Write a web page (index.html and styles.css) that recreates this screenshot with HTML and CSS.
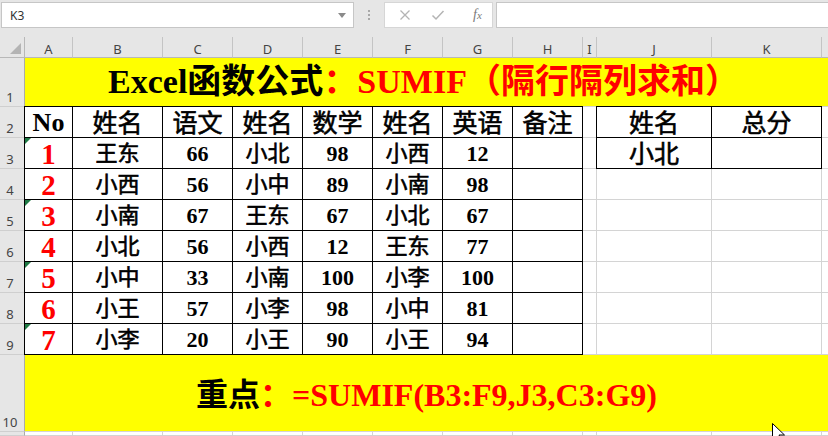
FILE: index.html
```html
<!DOCTYPE html>
<html lang="zh-CN">
<head>
<meta charset="utf-8">
<title>SUMIF 隔行隔列求和</title>
<link rel="stylesheet" href="styles.css">
</head>
<body>
<div class="app">
  <div class="fbar">
    <div class="namebox">
      <span class="ref">K3</span>
      <svg class="dd" width="8" height="5" viewBox="0 0 8 5"><path d="M0 0 L8 0 L4 5 Z" fill="#8a8a8a"/></svg>
    </div>
    <div class="dots"><i></i><i></i><i></i></div>
    <div class="iconbox">
      <svg class="ic" width="12" height="12" viewBox="0 0 12 12"><path d="M1.5 1.5 L10.5 10.5 M10.5 1.5 L1.5 10.5" stroke="#b4b4b4" stroke-width="1.3" fill="none"/></svg>
      <svg class="ic" width="14" height="12" viewBox="0 0 14 12"><path d="M1.5 6.5 L5 10 L12.5 2" stroke="#b4b4b4" stroke-width="1.5" fill="none"/></svg>
      <span class="fx"><i>f</i><i class="x">x</i></span>
    </div>
    <div class="finput"></div>
  </div>

  <div class="sheet">
    <!-- column headers -->
    <div class="corner"><span class="ctri"></span></div>
    <div class="ch">A</div><div class="ch">B</div><div class="ch">C</div><div class="ch">D</div>
    <div class="ch">E</div><div class="ch">F</div><div class="ch">G</div><div class="ch">H</div>
    <div class="ch">I</div><div class="ch">J</div><div class="ch">K</div><div class="ch last"></div>

    <!-- row 1 -->
    <div class="rh">1</div>
    <div class="title">Excel函数公式<span class="red">：SUMIF（隔行隔列求和）</span></div>

    <!-- row 2 -->
    <div class="rh">2</div>
    <div class="c t tl lat">No</div>
    <div class="c t top hd">姓名</div>
    <div class="c t top hd">语文</div>
    <div class="c t top hd">姓名</div>
    <div class="c t top hd">数学</div>
    <div class="c t top hd">姓名</div>
    <div class="c t top hd">英语</div>
    <div class="c t top hd">备注</div>
    <div class="c"></div>
    <div class="c t tl hd">姓名</div>
    <div class="c t top hd">总分</div>
    <div class="c last"></div>

    <!-- row 3 -->
    <div class="rh">3</div>
    <div class="c t lft num">1<span class="mark"></span></div>
    <div class="c t nm">王东</div><div class="c t sc">66</div>
    <div class="c t nm">小北</div><div class="c t sc">98</div>
    <div class="c t nm">小西</div><div class="c t sc">12</div>
    <div class="c t"></div><div class="c"></div>
    <div class="c t lft hd">小北</div><div class="c t"></div><div class="c last"></div>

    <!-- row 4 -->
    <div class="rh">4</div>
    <div class="c t lft num">2</div>
    <div class="c t nm">小西</div><div class="c t sc">56</div>
    <div class="c t nm">小中</div><div class="c t sc">89</div>
    <div class="c t nm">小南</div><div class="c t sc">98</div>
    <div class="c t"></div><div class="c"></div>
    <div class="c"></div><div class="c"></div><div class="c last"></div>

    <!-- row 5 -->
    <div class="rh">5</div>
    <div class="c t lft num">3<span class="mark"></span></div>
    <div class="c t nm">小南</div><div class="c t sc">67</div>
    <div class="c t nm">王东</div><div class="c t sc">67</div>
    <div class="c t nm">小北</div><div class="c t sc">67</div>
    <div class="c t"></div><div class="c"></div>
    <div class="c"></div><div class="c"></div><div class="c last"></div>

    <!-- row 6 -->
    <div class="rh">6</div>
    <div class="c t lft num">4</div>
    <div class="c t nm">小北</div><div class="c t sc">56</div>
    <div class="c t nm">小西</div><div class="c t sc">12</div>
    <div class="c t nm">王东</div><div class="c t sc">77</div>
    <div class="c t"></div><div class="c"></div>
    <div class="c"></div><div class="c"></div><div class="c last"></div>

    <!-- row 7 -->
    <div class="rh">7</div>
    <div class="c t lft num">5<span class="mark"></span></div>
    <div class="c t nm">小中</div><div class="c t sc">33</div>
    <div class="c t nm">小南</div><div class="c t sc">100</div>
    <div class="c t nm">小李</div><div class="c t sc">100</div>
    <div class="c t"></div><div class="c"></div>
    <div class="c"></div><div class="c"></div><div class="c last"></div>

    <!-- row 8 -->
    <div class="rh">8</div>
    <div class="c t lft num">6</div>
    <div class="c t nm">小王</div><div class="c t sc">57</div>
    <div class="c t nm">小李</div><div class="c t sc">98</div>
    <div class="c t nm">小中</div><div class="c t sc">81</div>
    <div class="c t"></div><div class="c"></div>
    <div class="c"></div><div class="c"></div><div class="c last"></div>

    <!-- row 9 -->
    <div class="rh">9</div>
    <div class="c t lft num">7<span class="mark"></span></div>
    <div class="c t nm">小李</div><div class="c t sc">20</div>
    <div class="c t nm">小王</div><div class="c t sc">90</div>
    <div class="c t nm">小王</div><div class="c t sc">94</div>
    <div class="c t"></div><div class="c"></div>
    <div class="c"></div><div class="c"></div><div class="c last"></div>

    <!-- row 10 -->
    <div class="rh">10</div>
    <div class="note">重点<span class="red">：=SUMIF(B3:F9,J3,C3:G9)</span></div>

    <!-- row 11 (partially visible) -->
    <div class="rh"></div>
    <div class="c"></div><div class="c"></div><div class="c"></div><div class="c"></div>
    <div class="c"></div><div class="c"></div><div class="c"></div><div class="c"></div>
    <div class="c"></div><div class="c"></div><div class="c"></div><div class="c last"></div>
  </div>

  <svg class="cursor" width="14" height="22" viewBox="0 0 14 22"><path d="M0.5 0.5 L0.5 17 L4.5 13 L7.5 20 L10 19 L7 12 L12.5 12 Z" fill="#fff" stroke="#000" stroke-width="1"/></svg>
</div>
</body>
</html>
```

FILE: styles.css
```css
html, body {
  margin: 0;
  padding: 0;
}
body {
  width: 828px;
  height: 436px;
  overflow: hidden;
  background: #e6e6e6;
}
.app {
  position: relative;
  width: 828px;
  height: 436px;
  overflow: hidden;
  background: #e6e6e6;
  display: flex;
  flex-direction: column;
}

/* formula bar */
.fbar {
  height: 37px;
  display: flex;
  align-items: flex-start;
  padding-top: 2px;
  box-sizing: border-box;
}
.namebox {
  width: 353px;
  height: 26px;
  box-sizing: border-box;
  margin-left: 1px;
  background: #fff;
  border: 1px solid #c6c6c6;
  display: flex;
  align-items: center;
  justify-content: space-between;
  padding: 0 7px 0 8px;
  font-family: "Noto Sans", "Liberation Sans", sans-serif;
  font-size: 12px;
  color: #333;
}
.dd { display: block; }
.dots {
  width: 30px;
  height: 26px;
  display: flex;
  flex-direction: column;
  align-items: center;
  justify-content: center;
  gap: 2px;
}
.dots i {
  width: 2px;
  height: 2px;
  background: #a8a8a8;
}
.iconbox {
  width: 109px;
  height: 26px;
  box-sizing: border-box;
  background: #fff;
  border: 1px solid #d6d6d6;
  display: flex;
  align-items: center;
  padding-left: 14px;
  gap: 20px;
}
.ic { display: block; }
.fx {
  margin-left: 8px;
  font-family: "Liberation Serif", serif;
  font-style: italic;
  font-size: 14px;
  color: #7a7a7a;
}
.fx i { font-style: italic; }
.fx .x { font-size: 11px; }
.finput {
  flex: 1;
  height: 26px;
  margin-left: 3px;
  box-sizing: border-box;
  background: #fff;
  border: 1px solid #c6c6c6;
  border-right: none;
}

/* sheet grid */
.sheet {
  flex: 1;
  display: grid;
  grid-template-columns: 25px 48px 90px 70px 70px 70px 70px 70px 70px 14px 115px 110px 1fr;
  grid-template-rows: 21px 49px repeat(8, 31px) 77px 1fr;
  background: #fff;
  font-family: "Liberation Serif", "Noto Sans CJK SC", serif;
  color: #000;
}
.corner {
  background: #e6e6e6;
  border-right: 1px solid #b8b8b8;
  border-bottom: 1px solid #b8b8b8;
  box-sizing: border-box;
  display: flex;
  align-items: flex-end;
  justify-content: flex-end;
  padding: 0 3px 3px 0;
}
.ctri {
  width: 0;
  height: 0;
  border-left: 11px solid transparent;
  border-bottom: 11px solid #b4b4b4;
}
.ch {
  background: #e6e6e6;
  border-right: 1px solid #c4c4c4;
  border-bottom: 1px solid #b8b8b8;
  box-sizing: border-box;
  display: flex;
  align-items: center;
  justify-content: center;
  padding-top: 3px;
  font-family: "Noto Sans", "Liberation Sans", sans-serif;
  font-size: 13px;
  color: #444;
}
.ch.last { border-right: none; }
.rh {
  background: #e6e6e6;
  border-right: 1px solid #ababab;
  border-bottom: 1px solid #cfcfcf;
  box-sizing: border-box;
  display: flex;
  align-items: flex-end;
  justify-content: center;
  padding-right: 4px;
  padding-bottom: 1px;
  font-family: "Noto Sans", "Liberation Sans", sans-serif;
  font-size: 13px;
  line-height: 16px;
  color: #444;
}

.c {
  box-sizing: border-box;
  border-right: 1px solid #d4d4d4;
  border-bottom: 1px solid #d4d4d4;
  background: #fff;
  display: flex;
  align-items: center;
  justify-content: center;
  line-height: 1;
  padding-top: 2px;
}
.c.last { border-right: none; }
.t {
  border-right-color: #000;
  border-bottom-color: #000;
}
.top { box-shadow: 0 -1px 0 #000; }
.lft { box-shadow: -1px 0 0 #000; }
.tl { box-shadow: -1px 0 0 #000, 0 -1px 0 #000, -1px -1px 0 #000; }

.hd {
  font-size: 25px;
  font-weight: 400;
  -webkit-text-stroke: 0.6px #000;
}
.lat {
  font-size: 26px;
  font-weight: 700;
}
.nm {
  font-size: 22px;
  font-weight: 400;
  -webkit-text-stroke: 0.6px #000;
}
.sc {
  font-size: 22px;
  font-weight: 700;
}
.num {
  position: relative;
  font-size: 29px;
  font-weight: 700;
  color: #ff0000;
}
.mark {
  position: absolute;
  left: 0;
  top: 0;
  width: 0;
  height: 0;
  border-top: 6px solid #1f7a45;
  border-right: 6px solid transparent;
}

.title, .note {
  grid-column: 2 / -1;
  background: #ffff00;
  box-sizing: border-box;
  border-bottom: 1px solid #d4d4d4;
  display: flex;
  align-items: center;
  justify-content: center;
  font-weight: 700;
  line-height: 1;
  white-space: nowrap;
}
.title {
  font-size: 34px;
  padding-right: 6px;
}
.note {
  font-size: 32px;
  padding-top: 4px;
}
.red { color: #ff0000; }

.cursor {
  position: absolute;
  left: 772px;
  top: 423px;
}
```
